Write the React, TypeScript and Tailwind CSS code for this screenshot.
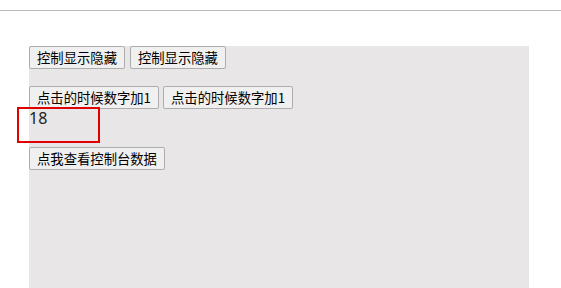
import React, { useState } from "react";

const btn =
  "h-[23px] px-[7px] border border-[#adadad] rounded-[2px] bg-[#f0f0f0] text-[13.33px] leading-[21px] text-black whitespace-nowrap";

export default function App() {
  const [n, setN] = useState(18);
  const [show, setShow] = useState(true);
  return (
    <div
      className="relative w-[561px] h-[288px] overflow-hidden bg-white"
      style={{ fontFamily: '"Noto Sans CJK SC", "Noto Sans", sans-serif' }}
    >
      <div className="h-[10px]" />
      <div className="h-px bg-[#b8b8b8]" />
      <div className="h-[35px]" />
      <div className="ml-[29px] w-[500px] h-[300px] bg-[#e8e6e6]">
        <div className="flex gap-[5px]">
          <button className={btn} onClick={() => setShow(!show)}>控制显示隐藏</button>
          <button className={btn} onClick={() => setShow(!show)}>控制显示隐藏</button>
        </div>
        <div className="flex gap-[4px] mt-[17px]">
          <button className={btn} onClick={() => setN(n + 1)}>点击的时候数字加1</button>
          <button className={btn} onClick={() => setN(n + 1)}>点击的时候数字加1</button>
        </div>
        <div className="h-[19px] text-[16px] leading-[19px] text-[#222]" style={{ fontFamily: '"Noto Sans", sans-serif' }}>
          {n}
        </div>
        <div className="mt-[19px] flex">
          <button className={btn} onClick={() => console.log(n)}>点我查看控制台数据</button>
        </div>
      </div>
      <div className="absolute left-[17px] top-[107px] w-[83px] h-[36px] border-2 border-[#e00000]" />
    </div>
  );
}
